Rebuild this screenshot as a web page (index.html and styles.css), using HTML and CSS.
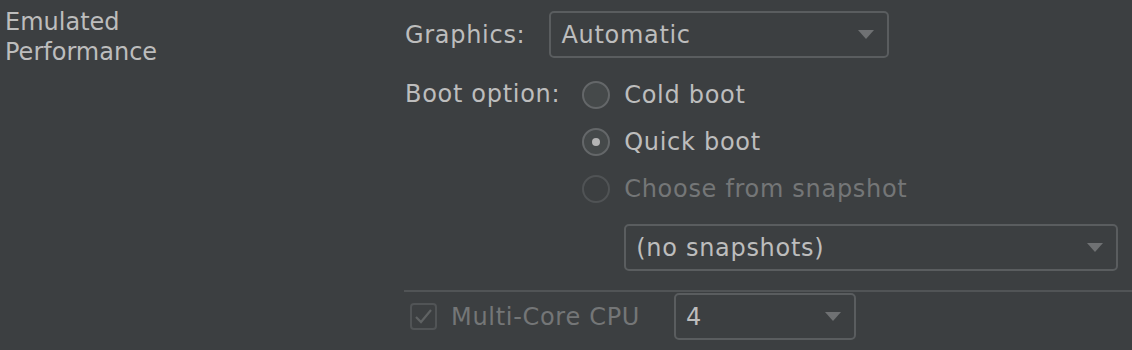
FILE: index.html
```html
<!DOCTYPE html>
<html lang="en">

    <head>
        <meta charset="UTF-8">
        <title>Emulated Performance</title>
        <link rel="stylesheet" href="styles.css">
    </head>

    <body>
        <div class="panel">
            <div class="section-title">Emulated<br>Performance</div>

            <div class="settings">
                <div class="row graphics-row">
                    <span class="label">Graphics:</span>
                    <div class="combo combo-graphics">
                        <span>Automatic</span>
                        <span class="arrow"></span>
                    </div>
                </div>

                <div class="boot-row">
                    <span class="label boot-label">Boot option:</span>
                    <div class="radios">
                        <div class="radio-item">
                            <span class="radio"></span>
                            <span>Cold boot</span>
                        </div>
                        <div class="radio-item">
                            <span class="radio checked"></span>
                            <span>Quick boot</span>
                        </div>
                        <div class="radio-item disabled">
                            <span class="radio"></span>
                            <span>Choose from snapshot</span>
                        </div>
                        <div class="combo combo-snapshot">
                            <span>(no snapshots)</span>
                            <span class="arrow"></span>
                        </div>
                    </div>
                </div>

                <div class="separator"></div>

                <div class="row cpu-row">
                    <span class="checkbox">
                        <svg width="19" height="17" viewBox="0 0 19 17">
                            <path d="M2 9 L7 14 L17 2" fill="none" stroke="#5f6263" stroke-width="2.2" />
                        </svg>
                    </span>
                    <span class="label disabled">Multi-Core CPU</span>
                    <div class="combo combo-cpu">
                        <span>4</span>
                        <span class="arrow"></span>
                    </div>
                </div>
            </div>
        </div>
    </body>

</html>
```

FILE: styles.css
```css
body {
    margin: 0;
    background-color: #3c3f41;
    color: #bdbdbd;
    font-family: "DejaVu Sans", sans-serif;
    font-size: 24px;
}

.panel {
    display: flex;
    height: 350px;
    overflow: hidden;
}

.section-title {
    width: 400px;
    padding-left: 5px;
    padding-top: 7px;
    line-height: 30px;
}

.settings {
    flex: 1;
    display: flex;
    flex-direction: column;
    letter-spacing: 0.7px;
}

.row {
    display: flex;
    align-items: center;
    height: 47px;
}

.graphics-row {
    margin-top: 11px;
    gap: 24px;
}

.combo {
    box-sizing: border-box;
    height: 47px;
    border: 2px solid #5a5d5f;
    border-radius: 5px;
    display: flex;
    align-items: center;
    justify-content: space-between;
    padding: 0 13px 0 10px;
}

.arrow {
    width: 0;
    height: 0;
    border-left: 8px solid transparent;
    border-right: 8px solid transparent;
    border-top: 9px solid #6f7173;
}

.combo-graphics {
    width: 340px;
}

.boot-row {
    display: flex;
    margin-top: 13px;
    gap: 22px;
}

.boot-label {
    height: 47px;
    line-height: 47px;
}

.radios {
    display: flex;
    flex-direction: column;
}

.radio-item {
    display: flex;
    align-items: center;
    gap: 14px;
    height: 47px;
}

.radio {
    box-sizing: border-box;
    width: 28px;
    height: 28px;
    border-radius: 50%;
    border: 2px solid #646769;
    background: #45494a;
    display: flex;
    align-items: center;
    justify-content: center;
}

.radio.checked::after {
    content: "";
    width: 8px;
    height: 8px;
    border-radius: 50%;
    background: #b4b4b4;
}

.radio-item.disabled {
    color: #747677;
}

.radio-item.disabled .radio {
    border-color: #505355;
    background: transparent;
}

.combo-snapshot {
    width: 494px;
    margin-top: 12px;
    margin-left: 42px;
}

.separator {
    height: 2px;
    background: #515456;
    margin-top: 19px;
    margin-left: -1px;
}

.cpu-row {
    margin-top: 1px;
}

.checkbox {
    box-sizing: border-box;
    width: 27px;
    height: 27px;
    margin-left: 5px;
    border: 2px solid #515456;
    border-radius: 4px;
    display: flex;
    align-items: center;
    justify-content: center;
}

.label.disabled {
    color: #747677;
    margin-left: 14px;
}

.combo-cpu {
    width: 182px;
    margin-left: 34px;
}
```
